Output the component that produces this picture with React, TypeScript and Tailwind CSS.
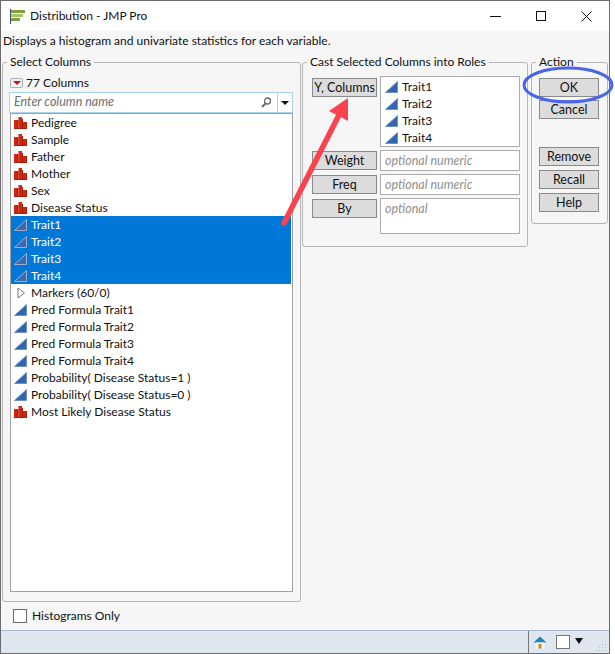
import type { ReactNode } from "react";

const font = "font-['Lato','Open_Sans',sans-serif]";

type Kind = "nominal" | "continuous" | "group";

const columns: { name: string; kind: Kind; selected?: boolean }[] = [
  { name: "Pedigree", kind: "nominal" },
  { name: "Sample", kind: "nominal" },
  { name: "Father", kind: "nominal" },
  { name: "Mother", kind: "nominal" },
  { name: "Sex", kind: "nominal" },
  { name: "Disease Status", kind: "nominal" },
  { name: "Trait1", kind: "continuous", selected: true },
  { name: "Trait2", kind: "continuous", selected: true },
  { name: "Trait3", kind: "continuous", selected: true },
  { name: "Trait4", kind: "continuous", selected: true },
  { name: "Markers (60/0)", kind: "group" },
  { name: "Pred Formula Trait1", kind: "continuous" },
  { name: "Pred Formula Trait2", kind: "continuous" },
  { name: "Pred Formula Trait3", kind: "continuous" },
  { name: "Pred Formula Trait4", kind: "continuous" },
  { name: "Probability( Disease Status=1 )", kind: "continuous" },
  { name: "Probability( Disease Status=0 )", kind: "continuous" },
  { name: "Most Likely Disease Status", kind: "nominal" },
];

function BarsIcon() {
  return (
    <svg width="13" height="12" viewBox="0 0 13 12" className="shrink-0">
      <path d="M0 3h3v8H0zM4.500 0h3.500v11H4.500zM9 5h3v6H9z" fill="#d4260f" />
      <path d="M0 11h12.500v1H0zM3 3h1.500v8H3zM8 2h1v9H8zM12 5h1v7h-1z" fill="#a81c08" />
    </svg>
  );
}

function WedgeIcon({ selected }: { selected?: boolean }) {
  return (
    <svg width="13" height="12" viewBox="0 0 13 12" className="shrink-0">
      <path
        d="M0.500 11.500L12.500 0.500V11.500Z"
        fill={selected ? "#3a6ab0" : "#2f66ad"}
        stroke={selected ? "#a2adc8" : "#6f90c4"}
      />
    </svg>
  );
}

function ColumnRow({ name, kind, selected }: { name: string; kind: Kind; selected?: boolean }) {
  return (
    <div className={`flex h-[17px] items-center ${selected ? "bg-[#0078d7] text-white" : "text-[#111]"}`}>
      <span className="flex w-[20px] pl-[3px]">
        {kind === "nominal" && <BarsIcon />}
        {kind === "continuous" && <WedgeIcon selected={selected} />}
        {kind === "group" && (
          <svg width="9" height="12" viewBox="0 0 9 12" className="ml-[3px]">
            <path d="M1 1l6.500 5L1 11z" fill="#fff" stroke="#777" />
          </svg>
        )}
      </span>
      <span className="whitespace-pre leading-[17px]">{name}</span>
    </div>
  );
}

function Group({ title, className, children }: { title: string; className: string; children: ReactNode }) {
  return (
    <fieldset className={`min-w-0 shrink-0 rounded-[3px] border border-[#b5b5b5] ${className}`}>
      <legend className="ml-[4px] px-[3px] text-[12px] leading-[14px] text-[#111]">{title}</legend>
      {children}
    </fieldset>
  );
}

function RoleButton({ label, className = "" }: { label: string; className?: string }) {
  return (
    <button className={`flex h-[19px] shrink-0 items-center justify-center border border-[#8a8a8a] bg-[#dcdcdc] pt-px text-[12.5px] text-[#111] ${className}`}>
      {label}
    </button>
  );
}

function RoleField({ text, className }: { text: string; className: string }) {
  return (
    <div className={`w-[140px] border border-[#ababab] bg-white px-[4px] text-[12.5px] italic leading-[19px] text-[#909090] ${className}`}>{text}</div>
  );
}

export default function App() {
  return (
    <div className={`relative h-[654px] w-[615px] overflow-hidden bg-white text-[12px] ${font}`}>
      <div className="flex h-[654px] w-[610px] flex-col border border-[#6b6b6b] bg-[#f6f6f6]">
        <div className="flex h-[30px] shrink-0 items-center bg-white pl-[9px] text-[#111]">
          <svg width="16" height="15" viewBox="0 0 16 15" className="shrink-0">
            <path d="M0 0h1v15H0z" fill="#33506e" />
            <path d="M1 1h14v3H1z" fill="#7ba23f" />
            <path d="M1 5h12v3H1z" fill="#a5c266" />
            <path d="M1 9h9v3H1z" fill="#7ba23f" />
          </svg>
          <span className="ml-[4px]">Distribution - JMP Pro</span>
          <div className="ml-auto flex items-center">
            <span className="mr-[35px] h-px w-[11px] bg-[#111]" />
            <span className="mr-[35px] h-[10px] w-[10px] border border-[#111]" />
            <svg width="11" height="11" viewBox="0 0 11 11" className="mr-[17px]">
              <path d="M0.500 0.500l10 10M10.500 0.500l-10 10" stroke="#111" fill="none" />
            </svg>
          </div>
        </div>
        <div className="h-[24px] shrink-0 pl-[2px] leading-[19px] text-[#111]">Displays a histogram and univariate statistics for each variable.</div>
        <div className="flex items-start gap-px pl-px">
          <Group title="Select Columns" className="h-[547px] w-[299px]">
            <div className="pl-[7px] pt-[6px]">
              <div className="flex h-[16px] items-center gap-[3px] text-[#111]">
                <span className="flex h-[10px] w-[13px] items-center justify-center rounded-[2px] border border-[#b0b0b0] bg-[#f0f0f0]">
                  <span className="h-0 w-0 border-x-[4px] border-t-[4px] border-x-transparent border-t-[#c8102e]" />
                </span>
                77 Columns
              </div>
              <div className="-ml-px mt-px flex h-[21px] w-[284px] items-center border border-[#a9d3ea] bg-white">
                <span className="flex-1 pl-[4px] text-[12.5px] italic text-[#6e6e6e]">Enter column name</span>
                <svg width="11" height="11" viewBox="0 0 11 11" className="mr-[5px]">
                  <circle cx="6.500" cy="4" r="3" fill="none" stroke="#666" strokeWidth="1.300" />
                  <path d="M4.500 6.500L1 10" stroke="#666" strokeWidth="1.800" />
                </svg>
                <span className="flex h-full w-[15px] items-center justify-center border-l border-[#a9d3ea]">
                  <span className="h-0 w-0 border-x-[4px] border-t-[4px] border-x-transparent border-t-[#111]" />
                </span>
              </div>
              <div className="h-[479px] w-[283px] border border-[#a0a0a0] bg-white pr-px">
                {columns.map((c) => (
                  <ColumnRow key={c.name} {...c} />
                ))}
              </div>
            </div>
          </Group>
          <Group title="Cast Selected Columns into Roles" className="h-[192px] w-[226px]">
            <div className="flex flex-col gap-[3px] pl-[9px] pt-[7px]">
              <div className="flex gap-[3px]">
                <RoleButton label="Y, Columns" className="mt-[2px] w-[65px]" />
                <div className="h-[71px] w-[140px] border border-[#ababab] bg-white pt-px text-[#111]">
                  {[1, 2, 3, 4].map((n) => (
                    <div key={n} className="flex h-[17px] items-center gap-[4px] pl-[4px]">
                      <WedgeIcon />
                      Trait{n}
                    </div>
                  ))}
                </div>
              </div>
              <div className="flex gap-[3px]">
                <RoleButton label="Weight" className="mt-px w-[65px]" />
                <RoleField text="optional numeric" className="h-[21px]" />
              </div>
              <div className="flex gap-[3px]">
                <RoleButton label="Freq" className="mt-px w-[65px]" />
                <RoleField text="optional numeric" className="h-[21px]" />
              </div>
              <div className="flex gap-[3px]">
                <RoleButton label="By" className="mt-px w-[65px]" />
                <RoleField text="optional" className="h-[36px]" />
              </div>
            </div>
          </Group>
          <Group title="Action" className="ml-[2px] h-[169px] w-[77px]">
            <div className="flex flex-col pl-[7px] pt-[9px]">
              <RoleButton label="OK" className="w-[60px]" />
              <RoleButton label="Cancel" className="mt-[3px] w-[60px]" />
              <RoleButton label="Remove" className="mt-[28px] w-[60px]" />
              <RoleButton label="Recall" className="mt-[4px] w-[60px]" />
              <RoleButton label="Help" className="mt-[4px] w-[60px]" />
            </div>
          </Group>
        </div>
        <div className="flex flex-1 items-center gap-[5px] pl-[12px] text-[#111]">
          <span className="h-[14px] w-[14px] border border-[#6b6b6b] bg-white" />
          Histograms Only
        </div>
        <div className="flex h-[23px] shrink-0 items-center justify-end border-t border-t-[#aab4d4] bg-[#e0e6f0]">
          <div className="flex h-full w-[81px] items-center border-l border-[#777] pl-[4px]">
            <svg width="14" height="13" viewBox="0 0 14 13" className="shrink-0">
              <path d="M7 0.500L0.500 6.500h13z" fill="#1b86b8" />
              <path d="M2.500 6.500h9v6h-9z" fill="#eef3f6" />
              <path d="M5.500 8h3v4.500h-3z" fill="#c28a2c" />
            </svg>
            <span className="ml-[9px] h-[14px] w-[14px] shrink-0 border border-[#777] bg-white" />
            <span className="mb-[3px] ml-[5px] h-0 w-0 shrink-0 border-x-[4px] border-t-[6px] border-x-transparent border-t-[#111]" />
            <svg width="12" height="12" viewBox="0 0 12 12" className="ml-auto mr-px mt-[8px] shrink-0">
              <path d="M9 1h1v1H9zM6 4h1v1H6zM9 4h1v1H9zM3 7h1v1H3zM6 7h1v1H6zM9 7h1v1H9zM0 10h1v1H0zM3 10h1v1H3zM6 10h1v1H6zM9 10h1v1H9z" fill="#b8bfcc" />
            </svg>
          </div>
        </div>
      </div>
      <svg width="615" height="654" viewBox="0 0 615 654" className="pointer-events-none absolute left-0 top-0">
        <path d="M284 223L339 115" stroke="#f9434f" strokeWidth="5.500" strokeLinecap="round" fill="none" />
        <path d="M348 98L329 111L348 121Z" fill="#f9434f" />
        <ellipse cx="568" cy="85" rx="44" ry="17" fill="none" stroke="#4a66e8" strokeWidth="3" />
      </svg>
    </div>
  );
}
